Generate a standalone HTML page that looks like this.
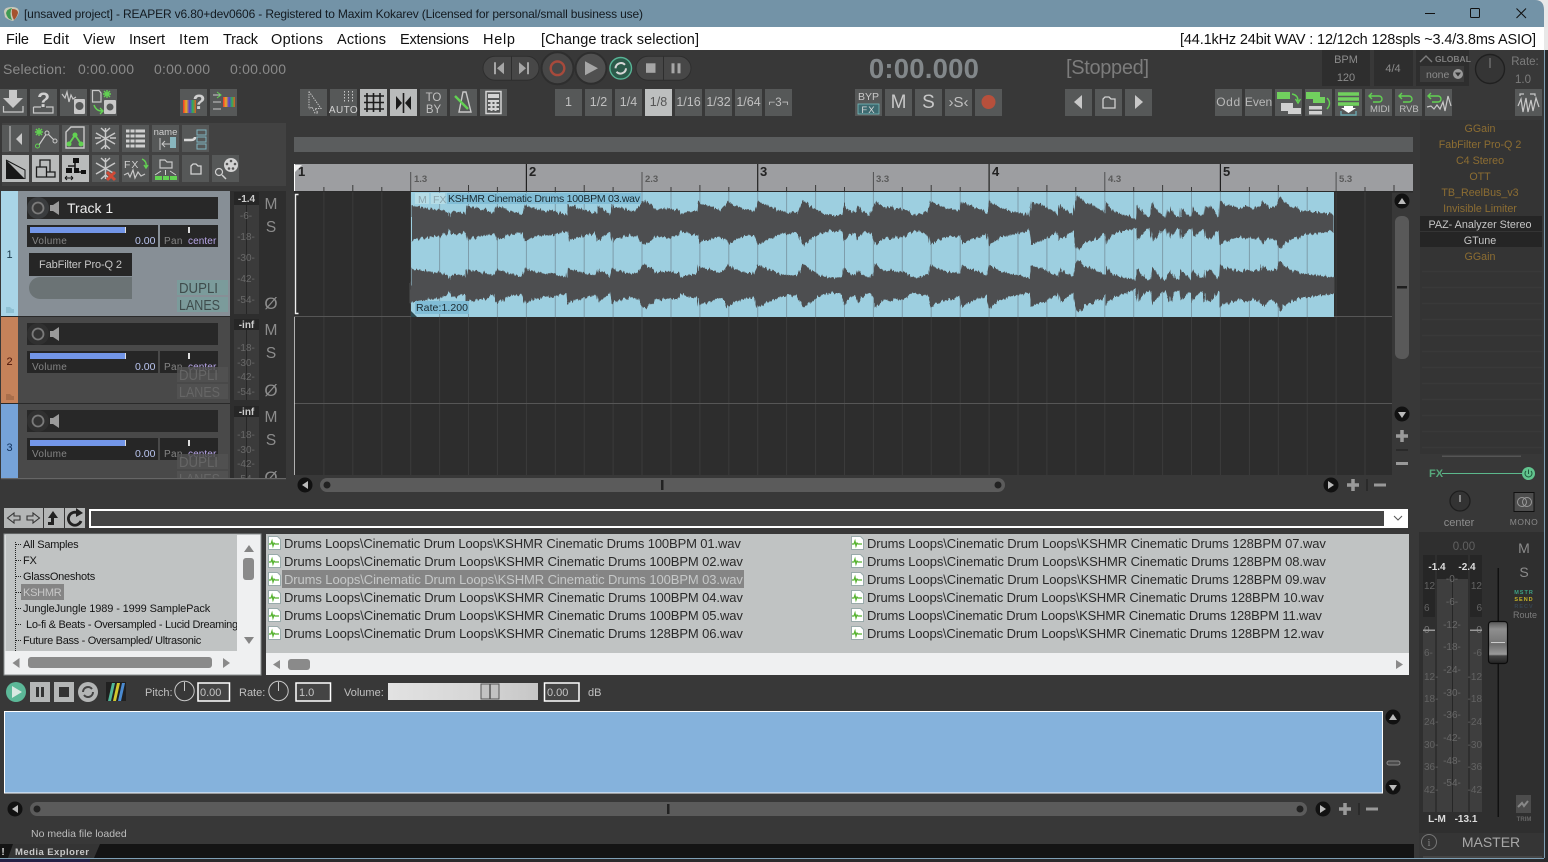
<!DOCTYPE html>
<html><head><meta charset="utf-8"><title>REAPER</title>
<style>
html,body{margin:0;padding:0;background:#2c2c2c;overflow:hidden}
svg{display:block;font-family:"Liberation Sans",sans-serif}
.b{fill:#565858}.l{fill:#b9bbbb}
.ic{fill:none;stroke:#c8c8c8;stroke-width:1.2}
.dk{fill:none;stroke:#1c1c1c;stroke-width:1.6}
.gr{fill:none;stroke:#62d152;stroke-width:1.4}
.t{fill:#c4c4c4;font-size:11px}
.m{font-size:14.5px;fill:#111}
.mid{text-anchor:middle}
.meter{font-size:10px;fill:#696969;text-anchor:middle}
.gold{font-size:10.7px;fill:#8c6d32;text-anchor:middle}
.tree{font-size:11px;fill:#151515;letter-spacing:-.25px}
.file{font-size:13px;fill:#2a2a2a;letter-spacing:.12px}
.lab{font-size:11px;fill:#c0c0c0}
</style></head><body>
<svg width="1548" height="862" viewBox="0 0 1548 862" xmlns="http://www.w3.org/2000/svg">
<defs>
<filter id="jag" filterUnits="userSpaceOnUse" x="405" y="190" width="935" height="130" color-interpolation-filters="sRGB"><feTurbulence type="fractalNoise" baseFrequency="0.55 0.015" numOctaves="2" seed="4" result="n"/><feDisplacementMap in="SourceGraphic" in2="n" scale="6" xChannelSelector="G" yChannelSelector="R"/></filter>
<linearGradient id="rb" x1="0" x2="1" y1="0" y2="0"><stop offset="0" stop-color="#e33"/><stop offset=".25" stop-color="#e8b020"/><stop offset=".5" stop-color="#5a3ad0"/><stop offset=".75" stop-color="#2cb05a"/><stop offset="1" stop-color="#e05a20"/></linearGradient>
<linearGradient id="fd" x1="0" x2="0" y1="0" y2="1"><stop offset="0" stop-color="#555"/><stop offset=".18" stop-color="#8f8f8f"/><stop offset=".45" stop-color="#7a7a7a"/><stop offset=".55" stop-color="#6f6f6f"/><stop offset=".78" stop-color="#9a9a9a"/><stop offset=".82" stop-color="#444"/><stop offset="1" stop-color="#222"/></linearGradient>
<linearGradient id="vs" x1="0" x2="1" y1="0" y2="0"><stop offset="0" stop-color="#e2e2e2"/><stop offset=".6" stop-color="#d6d6d6"/><stop offset="1" stop-color="#c6c6c6"/></linearGradient>
<path id="w" d="M411 0L411 -19L413 -17L416 -16L419 -17L422 -15L425 -16L428 -14L431 -15L435 -13L439 -14L443 -12L447 -11L449 -6L451 -11L455 -12L459 -11L463 -10L466 -9L467 -18L470 -16L473 -15L476 -16L479 -14L482 -13L485 -14L488 -12L491 -11L494 -10L497 -18L500 -15L503 -16L506 -13L510 -12L514 -11L518 -10L522 -9L525 -19L528 -17L531 -15L534 -16L537 -13L540 -14L544 -12L548 -12L552 -13L556 -11L560 -10L564 -9L567 -8L568 -19L571 -16L574 -17L577 -14L580 -15L584 -13L588 -12L592 -11L596 -10L598 -18L601 -15L604 -14L607 -11L610 -8L612 -19L615 -16L618 -15L621 -16L624 -13L627 -14L630 -12L634 -13L638 -14L640 -18L642 -21L645 -23L648 -20L652 -18L655 -14L658 -13L660 -15L664 -14L668 -15L672 -14L676 -13L679 -13L680 -8L684 -10L688 -11L692 -12L695 -12L697 -12L698 -22L701 -19L705 -18L709 -17L713 -16L717 -14L720 -13L724 -16L728 -22L731 -20L735 -17L739 -16L743 -14L747 -13L751 -13L755 -12L757 -22L760 -21L764 -19L768 -17L772 -16L776 -14L780 -12L785 -11L789 -10L793 -11L797 -10L799 -14L803 -23L806 -21L810 -17L815 -14L820 -11L825 -9L830 -8L835 -8L840 -8L842 -9L844 -20L847 -15L850 -12L853 -11L856 -11L858 -18L861 -12L864 -11L867 -9L870 -8L873 -15L876 -23L879 -19L883 -16L887 -15L891 -17L895 -14L899 -15L903 -14L907 -13L911 -9L915 -8L919 -9L923 -10L926 -11L928 -12L930 -22L933 -21L937 -18L941 -17L945 -15L949 -14L953 -14L957 -13L960 -12L962 -22L965 -20L968 -18L972 -17L976 -15L980 -14L984 -12L987 -10L989 -23L992 -20L996 -18L1000 -15L1005 -14L1010 -12L1015 -11L1020 -10L1025 -9L1029 -7L1031 -22L1034 -20L1038 -19L1042 -18L1045 -17L1049 -14L1053 -12L1057 -10L1058 -8L1060 -18L1063 -15L1066 -13L1070 -11L1073 -8L1076 -24L1078 -27L1081 -25L1085 -20L1089 -19L1093 -18L1097 -15L1101 -14L1104 -11L1105 -10L1106 -22L1109 -16L1113 -12L1118 -10L1124 -8L1130 -7L1134 -5L1136 -4L1137 -18L1140 -14L1144 -9L1148 -6L1150 -6L1152 -20L1155 -16L1158 -12L1161 -8L1164 -6L1166 -6L1167 -14L1168 -10L1170 -17L1172 -12L1175 -7L1178 -6L1180 -6L1181 -16L1184 -13L1187 -9L1190 -7L1191 -6L1193 -16L1196 -12L1199 -9L1202 -7L1204 -8L1205 -17L1208 -15L1211 -17L1214 -12L1217 -8L1219 -7L1220 -23L1223 -20L1226 -17L1229 -19L1232 -16L1235 -17L1238 -15L1241 -14L1245 -17L1249 -16L1253 -14L1256 -17L1259 -15L1263 -22L1266 -18L1270 -15L1274 -16L1277 -18L1279 -25L1281 -26L1284 -21L1288 -19L1292 -15L1296 -16L1300 -13L1304 -12L1308 -12L1312 -11L1316 -11L1320 -10L1324 -10L1328 -9L1332 -9L1334 -9L1334 0Z"/>
</defs>

<!-- window base -->
<rect width="1548" height="862" fill="#2a2a2c"/>
<rect x="0" y="0" width="1548" height="50" fill="#e8e8e8"/>
<path d="M0 0H1535Q1544 0 1544 10V27H0Z" fill="#7393a7"/>
<rect x="0" y="27" width="1544" height="23" fill="#fff"/>
<rect x="0" y="50" width="1544" height="808" fill="#383838"/>
<rect x="0" y="858" width="1544" height="1" fill="#7fa0b5"/>
<rect x="1544" y="50" width="1" height="808" fill="#7fa0b5"/>

<!-- title bar -->
<path d="M4 12Q4 7 12 7Q19 7 19 12Q18 17 13 21Q8 20 5 17Z" fill="#c9c9b8"/><path d="M6 13Q7 9 12 8Q9 13 12 20Q7 19 6 13Z" fill="#3f9a52"/><path d="M12 9Q18 9 18 13Q17 17 14 20Q11 15 12 9Z" fill="#a5532f"/>
<text x="24" y="18" font-size="12px" fill="#131a20" textLength="619" lengthAdjust="spacing">[unsaved project] - REAPER v6.80+dev0606 - Registered to Maxim Kokarev (Licensed for personal/small business use)</text>
<path d="M1425 13.5H1435" stroke="#111" stroke-width="1"/><rect x="1470.5" y="8.5" width="9" height="9" fill="none" stroke="#111" rx="1"/><path d="M1516.5 8.5L1526 18M1526 8.5L1516.5 18" stroke="#111" stroke-width="1"/>

<!-- menu -->
<text class="m" x="6" y="44" textLength="23">File</text><text class="m" x="43" y="44" textLength="26">Edit</text><text class="m" x="83" y="44" textLength="32">View</text><text class="m" x="129" y="44" textLength="36">Insert</text><text class="m" x="179" y="44" textLength="30">Item</text><text class="m" x="223" y="44" textLength="35">Track</text><text class="m" x="271" y="44" textLength="52">Options</text><text class="m" x="337" y="44" textLength="49">Actions</text><text class="m" x="400" y="44" textLength="69">Extensions</text><text class="m" x="483" y="44" textLength="32">Help</text><text class="m" x="541" y="44" textLength="158">[Change track selection]</text>
<text class="m" x="1180" y="44" textLength="356">[44.1kHz 24bit WAV : 12/12ch 128spls ~3.4/3.8ms ASIO]</text>

<!-- selection -->
<g font-size="14px" fill="#8a8a8a"><text x="3" y="74" textLength="63">Selection:</text><text x="78" y="74" textLength="56">0:00.000</text><text x="154" y="74" textLength="56">0:00.000</text><text x="230" y="74" textLength="56">0:00.000</text></g>

<!-- transport -->
<g transform="translate(0 -.7)">
<rect x="483" y="57" width="56" height="24" rx="12" fill="#474747" stroke="#2e2e2e"/><path d="M511.5 57V81" stroke="#2e2e2e"/>
<path d="M494 63V75h2V63ZM504 63V75L497 69Z" fill="#a6a6a6"/><path d="M519 63V75L526 69ZM527 63V75h2V63Z" fill="#a6a6a6"/>
<circle cx="557.5" cy="69" r="16" fill="#474747" stroke="#2e2e2e" stroke-width="2"/><circle cx="557.5" cy="69" r="6.8" fill="none" stroke="#a74a3c" stroke-width="2.4"/>
<circle cx="591" cy="69" r="15.5" fill="#505050" stroke="#2e2e2e" stroke-width="2"/><path d="M585 62V76L598 69Z" fill="#a6a6a6"/>
<circle cx="620.7" cy="69" r="10.8" fill="#2b5a4a" stroke="#58b496" stroke-width="1.4"/><path d="M615.5 69a5.5 5.5 0 0 1 9.5-3.5M626 69a5.5 5.5 0 0 1-9.5 3.5" fill="none" stroke="#d6d6d6" stroke-width="2"/>
<rect x="636" y="57" width="55" height="24" rx="12" fill="#474747" stroke="#2e2e2e"/><path d="M663.5 57V81" stroke="#2e2e2e"/>
<rect x="646" y="64" width="9.5" height="9.5" fill="#a6a6a6"/><rect x="671.5" y="64" width="3" height="10" fill="#a6a6a6"/><rect x="677.5" y="64" width="3" height="10" fill="#a6a6a6"/>
</g>
<text x="924" y="78" font-size="27.5px" font-weight="bold" fill="#82878a" class="mid" letter-spacing=".2">0:00.000</text>
<text x="1066" y="74" font-size="20px" fill="#7c7c7c" textLength="83">[Stopped]</text>

<rect x="1322" y="50" width="48" height="36" fill="#2e2e2e"/><rect x="1374" y="50" width="39" height="36" fill="#2e2e2e"/><rect x="1416" y="50" width="53" height="36" fill="#2e2e2e"/>
<text x="1346" y="63" font-size="11px" fill="#8c8c8c" class="mid">BPM</text><text x="1346" y="81" font-size="11px" fill="#8c8c8c" class="mid">120</text>
<text x="1393" y="72" font-size="11px" fill="#8c8c8c" class="mid">4/4</text>
<path d="M1420 62L1426 56L1432 62" fill="none" stroke="#7d7d7d" stroke-width="1.4"/>
<text x="1435" y="62" font-size="8.5px" font-weight="bold" fill="#808080">GLOBAL</text>
<rect x="1420" y="66" width="44" height="16" fill="#3c3c3c"/><text x="1426" y="78" font-size="10.5px" fill="#8c8c8c">none</text><circle cx="1458" cy="74" r="5" fill="#9a9a9a"/><path d="M1455 72.5h6l-3 4z" fill="#333"/>
<circle cx="1490" cy="69" r="14.5" fill="#353535" stroke="#202020" stroke-width="1.4"/><path d="M1490 58V68" stroke="#888"/>
<text x="1525" y="65" font-size="11.5px" fill="#7c7c7c" class="mid">Rate:</text><text x="1523" y="83" font-size="11.5px" fill="#7c7c7c" class="mid">1.0</text>

<!-- toolbar row 1 -->
<g transform="translate(0 -1)">
<rect class="b" x="0" y="90" width="27" height="27"/>
<path d="M9 92H17V100H23L13 110L3 100H9Z" fill="#c8c8c8" transform="translate(0 -1)"/><path d="M3.5 107V113H23V107" class="ic"/>
<rect class="b" x="30" y="90" width="27" height="27"/>
<text x="43.5" y="108" font-size="21px" font-weight="bold" fill="#d0d0d0" class="mid">?</text><path d="M33.5 108V114H53V108H46M41 108H33.5" class="ic"/>
<rect class="b" x="60" y="90" width="27" height="27"/>
<path d="M62 95L65 99L67 93L69 103L71 96L73 100L76 98" class="ic"/><rect x="74" y="100" width="11" height="15" rx="1" fill="#c8c8c8"/><circle cx="79.5" cy="107" r="4" fill="#565858"/>
<rect class="b" x="90" y="90" width="27" height="27"/>
<path d="M92.500 91.500H99L101 94V103H92.500Z" class="ic"/><path d="M107 91L107 99M103 95H111M104 92L110 98M110 92L104 98" stroke="#62d152" stroke-width="1.4"/><path d="M94 106Q96 112 102 112M100 109L103 112L100 115" class="gr"/><rect x="104" y="101" width="12" height="14" rx="1" fill="#c8c8c8"/><circle cx="110" cy="108" r="3.5" fill="#565858"/>
<rect class="b" x="180" y="90" width="27" height="27"/>
<rect x="183" y="101" width="13" height="13" fill="url(#rb)"/><text x="199" y="110" font-size="21px" font-weight="bold" fill="#d0d0d0" class="mid">?</text>
<rect class="b" x="210" y="90" width="27" height="27"/>
<rect x="223" y="98" width="12" height="10" fill="url(#rb)"/><path d="M213 96H221M213 103H221M213 110H221" stroke="#c8c8c8"/><path d="M217 93L221 96L217 99" fill="none" stroke="#62d152"/>

<rect class="b" x="300" y="90" width="27" height="27"/>
<path d="M309 92.500V110M309 92.500L321 109.500H315L318 114H315L312 108L309 110" fill="none" stroke="#c8c8c8" stroke-dasharray="1.4 1.1"/>
<rect class="b" x="330" y="90" width="27" height="27"/>
<path d="M344.500 92V104M348.500 92V104M352.500 92V104" stroke="#c8c8c8" stroke-dasharray="1.5 1.5"/><text x="343.500" y="114" font-size="10px" fill="#d0d0d0" class="mid" letter-spacing=".4">AUTO</text>
<rect class="l" x="360" y="90" width="27" height="27"/>
<path d="M367 94V113M373.500 94V113M380 94V113M364 97H384M364 103.500H384M364 110H384" class="dk" stroke-width="1.6"/>
<rect class="l" x="390" y="90" width="27" height="27"/>
<path d="M396 97V111L402 104ZM411 97V111L405 104Z" fill="#1a1a1a"/><path d="M403.500 94V114" stroke="#1a1a1a" stroke-width="1.6"/>
<rect class="b" x="420" y="90" width="27" height="27"/>
<text x="433.500" y="102" font-size="11.500px" fill="#c0c0c0" class="mid">TO</text><text x="433.500" y="114" font-size="11.500px" fill="#c0c0c0" class="mid">BY</text>
<rect class="b" x="450" y="90" width="27" height="27"/>
<path d="M459 113L463 93H466L471 113Z" fill="none" stroke="#c8c8c8" stroke-width="1.4"/><path d="M455 97L468 110" stroke="#62d152" stroke-width="2.4"/>
<rect class="b" x="480" y="90" width="27" height="27"/>
<rect x="486" y="92.500" width="15" height="22" fill="none" stroke="#d4d4d4" stroke-width="1.5"/><rect x="488" y="95" width="11" height="4" fill="#d4d4d4"/><path d="M488 102h11M488 106h11M488 110h11M491.500 101v11M495.500 101v11" stroke="#d4d4d4" stroke-width="2" stroke-dasharray="none"/>

<g font-size="12.500px" fill="#c0c0c0" text-anchor="middle">
<rect class="b" x="555" y="90" width="27" height="27"/><text x="568.500" y="107">1</text>
<rect class="b" x="585" y="90" width="27" height="27"/><text x="598.500" y="107">1/2</text>
<rect class="b" x="615" y="90" width="27" height="27"/><text x="628.500" y="107">1/4</text>
<rect x="645" y="90" width="27" height="27" fill="#bdbfbf"/><text x="658.500" y="107" fill="#555">1/8</text>
<rect class="b" x="675" y="90" width="27" height="27"/><text x="688.500" y="107">1/16</text>
<rect class="b" x="705" y="90" width="27" height="27"/><text x="718.500" y="107">1/32</text>
<rect class="b" x="735" y="90" width="27" height="27"/><text x="748.500" y="107">1/64</text>
<rect class="b" x="765" y="90" width="27" height="27"/><text x="778.500" y="107" font-size="11.500px">⌐3¬</text>
</g>
<rect class="b" x="855" y="90" width="27" height="27"/><text x="868.500" y="101" font-size="10.500px" fill="#c8c8c8" class="mid">BYP</text><rect x="858" y="105" width="21" height="10" fill="#3d6a70" stroke="#7bb" stroke-width="0.8"/><text x="868.500" y="114" font-size="9.500px" fill="#d8d8d8" class="mid" letter-spacing="1">FX</text>
<rect class="b" x="885" y="90" width="27" height="27"/><text x="898.500" y="109" font-size="19px" fill="#c8c8c8" class="mid">M</text>
<rect class="b" x="915" y="90" width="27" height="27"/><text x="928.500" y="109" font-size="19px" fill="#c8c8c8" class="mid">S</text>
<rect class="b" x="945" y="90" width="27" height="27"/><text x="958.500" y="108" font-size="15px" fill="#c0c0c0" class="mid">›S‹</text>
<rect class="b" x="975" y="90" width="27" height="27"/><circle cx="988.500" cy="103" r="7" fill="#b7503c"/>
<rect class="b" x="1065" y="90" width="27" height="27"/><path d="M1074 103L1082 96V110Z" fill="#c8c8c8"/>
<rect class="b" x="1095" y="90" width="27" height="27"/><path d="M1103 109V100L1105 98H1109L1111 100H1115V109Z" fill="none" stroke="#d0d0d0" stroke-width="1.3"/>
<rect class="b" x="1125" y="90" width="27" height="27"/><path d="M1135 96V110L1143 103Z" fill="#c8c8c8"/>
<rect class="b" x="1215" y="90" width="27" height="27"/><text x="1228.500" y="107" font-size="12px" fill="#b8b8b8" class="mid" letter-spacing=".6">Odd</text>
<rect class="b" x="1245" y="90" width="27" height="27"/><text x="1258.500" y="107" font-size="12px" fill="#b8b8b8" class="mid">Even</text>
<rect class="b" x="1275" y="90" width="27" height="27"/><rect x="1277" y="93" width="13" height="7" fill="#71d05e"/><rect x="1281" y="104" width="12" height="8" fill="#d0d0d0"/><rect x="1288" y="109" width="13" height="6" fill="#d0d0d0"/><path d="M1292 95Q1298 96 1298 102M1295.500 100L1298 104L1300.500 100" class="gr"/>
<rect class="b" x="1305" y="90" width="27" height="27"/><rect x="1306" y="93" width="14" height="7" fill="#71d05e"/><rect x="1313" y="98" width="12" height="6" fill="#71d05e"/><rect x="1309" y="107" width="13" height="3.500" fill="#d0d0d0"/><rect x="1309" y="112" width="13" height="3.500" fill="#d0d0d0"/><path d="M1327 99Q1332 104 1327 110" class="gr"/>
<rect class="b" x="1335" y="90" width="27" height="27"/><path d="M1338 95h21M1338 100h21M1338 105h21" stroke="#71d05e" stroke-width="3.500"/><path d="M1344 109h9v2h3l-7.500 5-7.500-5h3z" fill="#fff" transform="translate(0 -2)"/><path d="M1341 112v4h15v-4" fill="none" stroke="#6ba6ae" stroke-width="1.400"/>
<rect class="b" x="1365" y="90" width="27" height="27"/><path d="M1370 97h9a3 3 0 0 1 0 6h-6M1372 94l-3 3 3 3" class="gr"/><text x="1380" y="113" font-size="9.500px" fill="#c0c0c0" class="mid">MIDI</text>
<rect class="b" x="1395" y="90" width="27" height="27"/><path d="M1400 97h9a3 3 0 0 1 0 6h-6M1402 94l-3 3 3 3" class="gr"/><text x="1409" y="113" font-size="9.500px" fill="#c0c0c0" class="mid">RVB</text>
<rect class="b" x="1425" y="90" width="27" height="27"/><path d="M1429 97h9a3 3 0 0 1 0 6h-6M1431 94l-3 3 3 3" class="gr"/><path d="M1427 108L1431 107L1434 110L1437 106L1440 110L1443 103L1445 112L1448 97L1451 107" class="ic"/>
<rect class="b" x="1515" y="90" width="27" height="27"/><path d="M1520 97v-2h4M1530 95h5v2M1518 107L1521 100L1523 113L1526 99L1528 113L1531 101L1533 112L1536 99L1539 108" class="ic"/>
</g>

<!-- tcp toolbar panel -->
<rect x="2" y="123" width="284" height="63" fill="#424242"/>
<rect class="b" x="2" y="125" width="27" height="27"/><path d="M10 126V151" stroke="#c8c8c8"/><path d="M16 139L22 133V145Z" fill="#c8c8c8"/>
<rect class="b" x="32" y="125" width="27" height="27"/><path d="M37 148L47 133L56 142" class="ic"/><circle cx="47" cy="133" r="2" fill="#565858" stroke="#c8c8c8"/><circle cx="37.500" cy="146" r="2" fill="#565858" stroke="#62d152"/><circle cx="55" cy="141" r="2" fill="#565858" stroke="#c8c8c8"/><path d="M39 128v8M35 132h8M36 129l6 6M42 129l-6 6" stroke="#62d152" stroke-width="1.400"/>
<rect class="b" x="62" y="125" width="27" height="27"/><path d="M66 132L71 127H84V148H66Z" fill="none" stroke="#c8c8c8" stroke-width="1.400"/><path d="M69 144L75 135L81 144" fill="none" stroke="#62d152" stroke-width="1.800"/><circle cx="69" cy="144" r="2.500" fill="#62d152"/><circle cx="75" cy="135" r="2.500" fill="#62d152"/><circle cx="81" cy="144" r="2.500" fill="#62d152"/>
<rect class="b" x="92" y="125" width="27" height="27"/><path d="M105.500 128V149M96 133L115 144M96 144L115 133M101 128l4.500 4 4.500-4M101 149l4.500-4 4.500 4M95 138l6 0M110 138l6 0" stroke="#c8c8c8" stroke-width="1.500" fill="none"/>
<rect class="b" x="122" y="125" width="27" height="27"/><path d="M126 131H145M126 136H145M126 141H145M126 146H145" stroke="#cfcfcf" stroke-width="3"/><path d="M130 128V149M135 128V149" stroke="#565858"/>
<rect class="b" x="152" y="125" width="27" height="27"/><text x="165.500" y="135" font-size="9.500px" fill="#d0d0d0" class="mid">name</text><path d="M162 144H172M165 141L162 144L165 147M160 138V150" fill="none" stroke="#c8c8c8" stroke-dasharray="none"/><rect x="170" y="137" width="6" height="11" fill="#88b6be"/>
<rect class="b" x="182" y="125" width="27" height="27"/><rect x="197" y="130" width="9" height="5" fill="none" stroke="#7fb3c0"/><rect x="197" y="137" width="9" height="5" fill="none" stroke="#7fb3c0"/><rect x="197" y="144" width="9" height="5" fill="none" stroke="#7fb3c0"/><path d="M184 140H191Q195 140 195 137" fill="none" stroke="#d8d8d8" stroke-width="2.500"/>

<rect class="l" x="2" y="155" width="27" height="27"/><path d="M6 160V179H25Z" fill="#181818"/><path d="M6 160L25 170V179" fill="none" stroke="#181818"/>
<rect class="l" x="32" y="155" width="27" height="27"/><path d="M36.500 167H46.500V177H36.500ZM46.500 172H55V177H46.500ZM40 167V160H50V172" fill="none" stroke="#1c1c1c" stroke-width="1.300"/>
<rect class="l" x="62" y="155" width="27" height="27"/><path d="M75 160V172H85M75 166H68" fill="none" stroke="#1a1a1a" stroke-width="1.600"/><rect x="73" y="158" width="6" height="5" fill="#111"/><rect x="66" y="168" width="6" height="5" fill="#111"/><rect x="74" y="168" width="5" height="5" fill="#111"/><rect x="81" y="170" width="5" height="4" fill="#111"/><path d="M65 178H73M65 178l2-2M65 178l2 2M73 178l-2-2M73 178l-2 2" stroke="#111" fill="none"/>
<rect class="b" x="92" y="155" width="27" height="27"/><path d="M105.500 158V179M96 163L115 174M96 174L115 163M101 158l4.500 4 4.500-4M101 179l4.500-4 4.500 4" stroke="#c8c8c8" stroke-width="1.500" fill="none"/><path d="M107 172L115 180M115 172L107 180" stroke="#d04a36" stroke-width="3"/>
<rect class="b" x="122" y="155" width="27" height="27"/><text x="124" y="168" font-size="10.500px" fill="#d0d0d0" letter-spacing="1">FX</text><path d="M142 159Q147 161 146 167M144 165L146 168L148 165" class="gr"/><path d="M124 175L128 173L130 177L133 170L135 178L138 172L141 176L145 174" class="ic"/>
<rect class="b" x="152" y="155" width="27" height="27"/><path d="M160 168V160H165L167 162H172V168Z" fill="none" stroke="#c8c8c8" stroke-width="1.200"/><path d="M155 175L161 171M165.500 170V175M176 175L170 171" stroke="#d0d0d0"/><rect x="155" y="176" width="7" height="4" fill="#62d152"/><rect x="163" y="176" width="6" height="4" fill="#62d152"/><rect x="170" y="176" width="7" height="4" fill="#62d152"/>
<rect class="b" x="182" y="155" width="27" height="27"/><path d="M191 174V166L193 164H196L198 166H201V174Z" fill="none" stroke="#d4d4d4" stroke-width="1.300"/>
<rect class="b" x="212" y="155" width="27" height="27"/><circle cx="231" cy="165" r="7" fill="#d2d2d2"/><g fill="#555"><circle cx="231" cy="161" r="1.300"/><circle cx="227" cy="164" r="1.300"/><circle cx="235" cy="164" r="1.300"/><circle cx="229" cy="168.500" r="1.300"/><circle cx="233" cy="168.500" r="1.300"/></g><circle cx="219" cy="172" r="3.500" fill="none" stroke="#d0d0d0" stroke-width="1.200"/><path d="M222 175L226 179" stroke="#d0d0d0" stroke-width="1.500"/>

<!-- arrange -->
<rect x="294" y="137" width="1119" height="15" fill="#5b5d5e"/>
<rect x="294" y="164" width="1119" height="27" fill="#9d9ea1"/>
<path d="M323.900 187V191M352.800 185V191M381.800 187V191M439.600 187V191M468.500 185V191M497.400 187V191M555.300 187V191M584.200 185V191M613.100 187V191M671 187V191M699.900 185V191M728.800 187V191M786.600 187V191M815.600 185V191M844.500 187V191M902.300 187V191M931.200 185V191M960.200 187V191M1018 187V191M1046.900 185V191M1075.800 187V191M1133.700 187V191M1162.600 185V191M1191.500 187V191M1249.400 187V191M1278.300 185V191M1307.200 187V191M1365 187V191M1394 185V191" stroke="#3a3a3a"/>
<path d="M410.700 172V191M642 172V191M873.400 172V191M1104.800 172V191M1336.100 172V191" stroke="#4e4e50"/>
<path d="M526.400 164V191M757.700 164V191M989.100 164V191M1220.400 164V191" stroke="#202020" stroke-width="1.200"/>
<path d="M294.500 164V191" stroke="#fff"/><path d="M295 165H302L295 172Z" fill="#eee"/>
<g font-size="13px" font-weight="bold" fill="#222"><text x="298" y="176">1</text><text x="529" y="176">2</text><text x="760" y="176">3</text><text x="992" y="176">4</text><text x="1223" y="176">5</text></g>
<g font-size="9.500px" font-weight="bold" fill="#5a5a5a"><text x="414" y="182">1.3</text><text x="645" y="182">2.3</text><text x="876" y="182">3.3</text><text x="1108" y="182">4.3</text><text x="1339" y="182">5.3</text></g>
<rect x="294" y="191" width="1119" height="1.500" fill="#2a2a2a"/>
<rect x="294" y="192" width="1098" height="283" fill="#2d2d2d"/>
<path d="M323.900 192V475M352.800 192V475M381.800 192V475M410.700 192V475M439.600 192V475M468.500 192V475M497.400 192V475M526.400 192V475M555.300 192V475M584.200 192V475M613.100 192V475M642 192V475M671 192V475M699.900 192V475M728.800 192V475M757.700 192V475M786.600 192V475M815.600 192V475M844.500 192V475M873.400 192V475M902.300 192V475M931.200 192V475M960.200 192V475M989.100 192V475M1018 192V475M1046.900 192V475M1075.800 192V475M1104.800 192V475M1133.700 192V475M1162.600 192V475M1191.500 192V475M1220.400 192V475M1249.400 192V475M1278.300 192V475M1307.200 192V475M1336.100 192V475M1365 192V475" stroke="#3b3b3b"/>
<path d="M294 316.500H1392M294 403.500H1392" stroke="#565656"/>
<path d="M298.500 194.500H295.500V313.500H298.500" fill="none" stroke="#eee" stroke-width="1.400"/><path d="M294.500 317V475" stroke="#e8e8e8" stroke-opacity=".7"/>
<!-- clip -->
<rect x="411" y="192" width="923" height="125" fill="#9dcfe0"/>
<path d="M439.600 192V317M468.500 192V317M497.400 192V317M526.400 192V317M555.300 192V317M584.200 192V317M613.100 192V317M642 192V317M671 192V317M699.900 192V317M728.800 192V317M757.700 192V317M786.600 192V317M815.600 192V317M844.500 192V317M873.400 192V317M902.300 192V317M931.200 192V317M960.200 192V317M989.100 192V317M1018 192V317M1046.900 192V317M1075.800 192V317M1104.800 192V317M1133.700 192V317M1162.600 192V317M1191.500 192V317M1220.400 192V317M1249.400 192V317M1278.300 192V317M1307.200 192V317" stroke="#7e9dab"/>
<g fill="#4d4e50" filter="url(#jag)"><use href="#w" transform="translate(0 223)"/><use href="#w" transform="translate(0 223) scale(1 -.98)"/><use href="#w" transform="translate(0 285) scale(1 .92)"/><use href="#w" transform="translate(0 285) scale(1 -1)"/></g>
<rect x="415" y="193" width="14" height="11" fill="#b5dce6"/><rect x="431" y="193" width="14" height="11" fill="#b5dce6"/>
<text x="418" y="203" font-size="10.500px" fill="#8da5ad">M</text><text x="433" y="203" font-size="10.500px" fill="#8da5ad">FX</text>
<rect x="447" y="193" width="194" height="11" fill="#81bdd6"/><text x="448" y="202" font-size="10.500px" fill="#1a2a30" textLength="192">KSHMR Cinematic Drums 100BPM 03.wav</text>
<rect x="415" y="301" width="54" height="13" fill="#81bdd6"/><text x="416" y="311" font-size="10.500px" fill="#1a2a30" textLength="52">Rate:1.200</text>
<path d="M411 311L417 317H411Z" fill="#2d4a50"/>

<!-- v scroll -->
<circle cx="1402" cy="201" r="7.500" fill="#111"/><path d="M1398 204h8l-4-6z" fill="#bbb"/>
<rect x="1395" y="216" width="14" height="143" rx="6" fill="#595959"/><rect x="1397" y="286" width="10" height="2.500" fill="#1f1f1f"/>
<circle cx="1402" cy="414" r="7.500" fill="#111"/><path d="M1398 412h8l-4 6z" fill="#bbb"/>
<path d="M1396 436H1408M1402 430V442" stroke="#9a9a9a" stroke-width="3.500"/><rect x="1396" y="449" width="12" height="2" fill="#2a2a2a"/><rect x="1396" y="462" width="12" height="3" fill="#999"/>
<!-- h scroll -->
<circle cx="305" cy="485" r="7.500" fill="#111"/><path d="M308 481v8l-6-4z" fill="#bbb"/>
<rect x="320" y="478" width="685" height="14" rx="7" fill="#5b5b5b"/><circle cx="327" cy="485" r="3.500" fill="#222"/><circle cx="998" cy="485" r="3.500" fill="#222"/><rect x="661" y="480" width="2.500" height="10" fill="#222"/>
<circle cx="1331" cy="485" r="7.500" fill="#111"/><path d="M1328 481v8l6-4z" fill="#bbb"/>
<path d="M1347 485H1359M1353 479V491" stroke="#9a9a9a" stroke-width="3.500"/><rect x="1366" y="479" width="2" height="12" fill="#2a2a2a"/><rect x="1374" y="483.500" width="12" height="3" fill="#999"/>

<!-- TCP -->
<rect x="1" y="191" width="285" height="287" fill="#2e2e2e"/>
<!-- track 1 -->
<rect x="1" y="191" width="17" height="125" fill="#a9d5e7"/><text x="9.500" y="258" font-size="11px" fill="#1b3a4a" class="mid">1</text><path d="M6 313V307H10L12 309H14V313Z" fill="#8fc0d2"/>
<rect x="18" y="191" width="212" height="125" fill="#878f96"/>
<rect x="27" y="197" width="191" height="22" fill="#282828"/><circle cx="38" cy="208" r="11" fill="#3a3c3e"/><circle cx="38" cy="208" r="5.500" fill="#3a3a3a" stroke="#7a7a7a" stroke-width="1.800"/>
<path d="M50 205h3l6-4v14l-6-4h-3z" fill="#9b9b9b"/><text x="67" y="213" font-size="14px" fill="#eee">Track 1</text>
<rect x="27" y="225" width="131" height="22" fill="#262626"/><rect x="30" y="227" width="96" height="6" fill="#7396e8"/><rect x="125" y="227" width="1" height="6" fill="#ddd"/>
<text x="32" y="244" font-size="10px" fill="#858585" letter-spacing=".3">Volume</text><text x="135" y="244" font-size="10.500px" fill="#b9c4ee">0.00</text>
<rect x="160" y="225" width="58" height="22" fill="#262626"/><rect x="188" y="227" width="2" height="6" fill="#ddd"/><text x="164" y="244" font-size="10px" fill="#858585" letter-spacing=".3">Pan</text><text x="188" y="244" font-size="10px" fill="#b8a6e8" letter-spacing=".1">center</text>
<rect x="29" y="253" width="103" height="23" fill="#262626"/><text x="39" y="268" font-size="11px" fill="#c6c6c6" textLength="83">FabFilter Pro-Q 2</text>
<path d="M132 277V299H40A11 11 0 0 1 40 277Z" fill="#6b7375"/>
<rect x="177" y="280" width="51" height="15" fill="#7b9b9b"/><rect x="177" y="297" width="51" height="15" fill="#7b9b9b"/>
<text x="179" y="293" font-size="14.500px" fill="#3f4c4c" textLength="39" lengthAdjust="spacingAndGlyphs">DUPLI</text><text x="179" y="310" font-size="14.500px" fill="#3f4c4c" textLength="41" lengthAdjust="spacingAndGlyphs">LANES</text>
<rect x="234" y="192" width="25" height="122" fill="#3b3b3b"/><rect x="234" y="192" width="25" height="13" fill="#262626"/><path d="M246.500 205V314" stroke="#262626"/>
<text x="246.500" y="202" font-size="10px" font-weight="bold" fill="#ccc" class="mid">-1.4</text>
<g class="meter"><text x="246" y="219" class="meter">-6-</text><text x="246" y="240" class="meter">-18-</text><text x="246" y="261" class="meter">-30-</text><text x="246" y="282" class="meter">-42-</text><text x="246" y="303" class="meter">-54-</text></g>
<text x="271" y="209" font-size="15.500px" fill="#8c8c8c" class="mid">M</text><text x="271" y="232" font-size="15.500px" fill="#8c8c8c" class="mid">S</text><text x="271" y="309" font-size="17px" fill="#8c8c8c" class="mid">Ø</text>
<!-- track 2 -->
<rect x="1" y="317" width="17" height="86" fill="#c5825a"/><text x="9.500" y="365" font-size="11px" fill="#4a1408" class="mid">2</text><path d="M6 400V394H10L12 396H14V400Z" fill="#a96e4b"/>
<rect x="18" y="317" width="212" height="86" fill="#494949"/>
<rect x="27" y="323" width="191" height="22" fill="#282828"/><circle cx="38" cy="334" r="11" fill="#303030"/><circle cx="38" cy="334" r="5.500" fill="#333" stroke="#7a7a7a" stroke-width="1.800"/><path d="M50 331h3l6-4v14l-6-4h-3z" fill="#9b9b9b"/>
<rect x="27" y="351" width="131" height="22" fill="#262626"/><rect x="30" y="353" width="96" height="6" fill="#7396e8"/><rect x="125" y="353" width="1" height="6" fill="#ddd"/>
<text x="32" y="370" font-size="10px" fill="#858585" letter-spacing=".3">Volume</text><text x="135" y="370" font-size="10.500px" fill="#b9c4ee">0.00</text>
<rect x="160" y="351" width="58" height="22" fill="#262626"/><rect x="188" y="353" width="2" height="6" fill="#ddd"/><text x="164" y="370" font-size="10px" fill="#858585" letter-spacing=".3">Pan</text><text x="188" y="370" font-size="10px" fill="#b8a6e8" letter-spacing=".1">center</text>
<rect x="177" y="367" width="51" height="15" fill="#515151" fill-opacity=".85"/><rect x="177" y="384" width="51" height="15" fill="#515151"/>
<text x="179" y="380" font-size="14.500px" fill="#666" textLength="39" lengthAdjust="spacingAndGlyphs">DUPLI</text><text x="179" y="397" font-size="14.500px" fill="#666" textLength="41" lengthAdjust="spacingAndGlyphs">LANES</text>
<rect x="234" y="319" width="25" height="81" fill="#3b3b3b"/><rect x="234" y="319" width="25" height="11" fill="#262626"/><path d="M246.500 330V400" stroke="#262626"/>
<text x="246.500" y="328" font-size="10px" font-weight="bold" fill="#ccc" class="mid">-inf</text>
<text x="246" y="351" class="meter">-18-</text><text x="246" y="366" class="meter">-30-</text><text x="246" y="380" class="meter">-42-</text><text x="246" y="395" class="meter">-54-</text>
<text x="271" y="335" font-size="15.500px" fill="#8c8c8c" class="mid">M</text><text x="271" y="358" font-size="15.500px" fill="#8c8c8c" class="mid">S</text><text x="271" y="396" font-size="17px" fill="#8c8c8c" class="mid">Ø</text>
<!-- track 3 -->
<rect x="1" y="404" width="17" height="74" fill="#76a3d8"/><text x="9.500" y="451" font-size="11px" fill="#10305a" class="mid">3</text>
<rect x="18" y="404" width="212" height="74" fill="#494949"/>
<rect x="27" y="410" width="191" height="22" fill="#282828"/><circle cx="38" cy="421" r="11" fill="#303030"/><circle cx="38" cy="421" r="5.500" fill="#333" stroke="#7a7a7a" stroke-width="1.800"/><path d="M50 418h3l6-4v14l-6-4h-3z" fill="#9b9b9b"/>
<rect x="27" y="438" width="131" height="22" fill="#262626"/><rect x="30" y="440" width="96" height="6" fill="#7396e8"/><rect x="125" y="440" width="1" height="6" fill="#ddd"/>
<text x="32" y="457" font-size="10px" fill="#858585" letter-spacing=".3">Volume</text><text x="135" y="457" font-size="10.500px" fill="#b9c4ee">0.00</text>
<rect x="160" y="438" width="58" height="22" fill="#262626"/><rect x="188" y="440" width="2" height="6" fill="#ddd"/><text x="164" y="457" font-size="10px" fill="#858585" letter-spacing=".3">Pan</text><text x="188" y="457" font-size="10px" fill="#b8a6e8" letter-spacing=".1">center</text>
<rect x="177" y="454" width="51" height="15" fill="#515151" fill-opacity=".85"/><rect x="177" y="471" width="51" height="15" fill="#515151"/>
<text x="179" y="467" font-size="14.500px" fill="#666" textLength="39" lengthAdjust="spacingAndGlyphs">DUPLI</text><text x="179" y="484" font-size="14.500px" fill="#666" textLength="41" lengthAdjust="spacingAndGlyphs">LANES</text>
<rect x="234" y="406" width="25" height="72" fill="#3b3b3b"/><rect x="234" y="406" width="25" height="11" fill="#262626"/><path d="M246.500 417V478" stroke="#262626"/>
<text x="246.500" y="415" font-size="10px" font-weight="bold" fill="#ccc" class="mid">-inf</text>
<text x="246" y="438" class="meter">-18-</text><text x="246" y="453" class="meter">-30-</text><text x="246" y="467" class="meter">-42-</text><text x="246" y="482" class="meter">-54-</text>
<text x="271" y="422" font-size="15.500px" fill="#8c8c8c" class="mid">M</text><text x="271" y="445" font-size="15.500px" fill="#8c8c8c" class="mid">S</text><text x="271" y="483" font-size="17px" fill="#8c8c8c" class="mid">Ø</text>
<path d="M1 316.500H230M1 403.500H230" stroke="#2a2a2a"/>
<rect x="0" y="478" width="290" height="28" fill="#383838"/><rect x="1" y="478" width="285" height="1.200" fill="#666"/>

<!-- FX panel -->
<rect x="1420" y="120" width="122" height="334" fill="#343434"/>
<path d="M1422 271.500H1542M1422 287.500H1542M1422 303.500H1542M1422 319.500H1542M1422 335.500H1542M1422 351.500H1542M1422 367.500H1542M1422 383.500H1542M1422 399.500H1542M1422 415.500H1542M1422 431.500H1542M1422 447.500H1542" stroke="#393939" stroke-width="1.500"/>
<rect x="1420" y="216" width="122" height="15" fill="#252525"/><rect x="1420" y="232" width="122" height="15" fill="#252525"/>
<text class="gold" x="1480" y="132">GGain</text><text class="gold" x="1480" y="148">FabFilter Pro-Q 2</text><text class="gold" x="1480" y="164">C4 Stereo</text><text class="gold" x="1480" y="180">OTT</text><text class="gold" x="1480" y="196">TB_ReelBus_v3</text><text class="gold" x="1480" y="212">Invisible Limiter</text>
<text x="1480" y="228" font-size="10.800px" fill="#c6c6c6" class="mid">PAZ- Analyzer Stereo</text><text x="1480" y="244" font-size="10.800px" fill="#c6c6c6" class="mid">GTune</text><text class="gold" x="1480" y="260">GGain</text>
<rect x="1442" y="455.500" width="79" height="1.500" fill="#555"/>
<text x="1429" y="477" font-size="11px" font-weight="bold" fill="#57a87c">FX</text><path d="M1442 473.500H1524" stroke="#5cb88c"/><circle cx="1528.500" cy="473.500" r="6.500" fill="#62c48e"/><path d="M1526 471a3.500 3.500 0 1 0 5 0M1528.500 469.500V474" fill="none" stroke="#1f5a3c"/>
<circle cx="1460" cy="501" r="10" fill="#333" stroke="#1e1e1e" stroke-width="1.300"/><path d="M1460 495V502" stroke="#aaa" stroke-width="1.400"/>
<text x="1459" y="526" font-size="11px" fill="#8d8d8d" class="mid">center</text>
<rect x="1514" y="492.500" width="20" height="19" fill="#4d4d4d" stroke="#111"/><circle cx="1522" cy="502" r="4.500" fill="none" stroke="#999"/><circle cx="1527" cy="502" r="4.500" fill="none" stroke="#999"/>
<text x="1524" y="525" font-size="8.500px" fill="#8a8a8a" class="mid" letter-spacing=".5">MONO</text>

<!-- master -->
<rect x="1419" y="532" width="125" height="308" fill="#2f2f2f"/>
<rect x="1419" y="833" width="125" height="25" fill="#353535"/><path d="M1423 857H1542" stroke="#555"/>
<text x="1464" y="550" font-size="11.500px" fill="#606060" class="mid">0.00</text>
<text x="1524" y="553" font-size="14px" fill="#8c8c8c" class="mid">M</text><text x="1524" y="577" font-size="14px" fill="#8c8c8c" class="mid">S</text>
<text x="1524" y="594" font-size="5.500px" font-weight="bold" fill="#3da084" class="mid" letter-spacing="1">MSTR</text><text x="1524" y="601" font-size="5.500px" font-weight="bold" fill="#c4b228" class="mid" letter-spacing="1">SEND</text><text x="1524" y="608" font-size="5.500px" font-weight="bold" fill="#374450" class="mid" letter-spacing="1">RECV</text>
<text x="1525" y="618" font-size="9px" fill="#7c7c7c" class="mid">Route</text>
<rect x="1423" y="555" width="12" height="62" fill="#262626"/><rect x="1470" y="555" width="12" height="62" fill="#262626"/><rect x="1437" y="555" width="31" height="24" fill="#262626"/>
<rect x="1423" y="630" width="12" height="182" fill="#3e3e3e"/><rect x="1470" y="630" width="12" height="182" fill="#3e3e3e"/><rect x="1437" y="579" width="31" height="233" fill="#3e3e3e"/>
<path d="M1452.500 579V812" stroke="#262626"/>
<text x="1437" y="570" font-size="10px" font-weight="bold" fill="#ddd" class="mid">-1.4</text><text x="1467" y="570" font-size="10px" font-weight="bold" fill="#ddd" class="mid">-2.4</text>
<g font-size="10px" fill="#636363"><text x="1424" y="589">12</text><text x="1424" y="611">6</text><text x="1424" y="633" fill="#777">0-</text><text x="1424" y="656">6-</text><text x="1424" y="680">12-</text><text x="1424" y="702">18-</text><text x="1424" y="725">24-</text><text x="1424" y="748">30-</text><text x="1424" y="770">36-</text><text x="1424" y="793">42-</text></g>
<g font-size="10px" fill="#636363" text-anchor="end"><text x="1482" y="589">12</text><text x="1482" y="611">6</text><text x="1482" y="633" fill="#777">-0</text><text x="1482" y="656">-6</text><text x="1482" y="680">-12</text><text x="1482" y="702">-18</text><text x="1482" y="725">-24</text><text x="1482" y="748">-30</text><text x="1482" y="770">-36</text><text x="1482" y="793">-42</text></g>
<text x="1452" y="582" class="meter">-0-</text><text x="1452" y="605" class="meter">-6-</text><text x="1452" y="628" class="meter">-12-</text><text x="1452" y="650" class="meter">-18-</text><text x="1452" y="673" class="meter">-24-</text><text x="1452" y="696" class="meter">-30-</text><text x="1452" y="718" class="meter">-36-</text><text x="1452" y="741" class="meter">-42-</text><text x="1452" y="764" class="meter">-48-</text><text x="1452" y="786" class="meter">-54-</text>
<rect x="1423" y="629.500" width="12" height="1.500" fill="#999"/><rect x="1470" y="629.500" width="12" height="1.500" fill="#999"/>
<rect x="1497.500" y="568" width="1.500" height="249" fill="#111"/>
<rect x="1488.500" y="621.500" width="19" height="42" rx="3" fill="url(#fd)" stroke="#0c0c0c" stroke-width="1.200"/><rect x="1491" y="642" width="14" height="1" fill="#ccc"/>
<rect x="1516" y="795" width="15" height="18" fill="#4c4c4c"/><path d="M1518 807l4-4 2 3 4-5" stroke="#888" stroke-width="2" fill="none"/>
<text x="1524" y="821" font-size="6px" font-weight="bold" fill="#666" class="mid">TRIM</text>
<text x="1437" y="822" font-size="10px" font-weight="bold" fill="#ddd" class="mid">L-M</text><text x="1466" y="822" font-size="10px" font-weight="bold" fill="#ddd" class="mid">-13.1</text>
<circle cx="1429" cy="842" r="7.500" fill="none" stroke="#777"/><text x="1429" y="846" font-size="10px" font-family="Liberation Serif" fill="#888" class="mid">i</text>
<text x="1491" y="847" font-size="14px" fill="#a8a8a8" class="mid">MASTER</text>

<!-- media explorer -->
<rect x="4" y="508" width="39" height="20" fill="#b4b6b6"/><rect x="44" y="508" width="20" height="20" fill="#b4b6b6"/><rect x="65" y="508" width="20" height="20" fill="#b4b6b6"/>
<path d="M7.500 518L14 513V516H20V520H14V523Z" fill="none" stroke="#333" stroke-width="1.100"/><path d="M39.500 518L33 513V516H27V520H33V523Z" fill="none" stroke="#333" stroke-width="1.100"/>
<path d="M48 525H54V518H58L53 511L48 518H51V522H48Z" fill="#222"/>
<path d="M81 521A6.500 6.500 0 1 1 78 513" fill="none" stroke="#222" stroke-width="2.800"/><path d="M76 508L83 513L76 517Z" fill="#222"/>
<rect x="89" y="509" width="1319" height="19" fill="#fff"/><rect x="91" y="511" width="1293" height="15" fill="#454545"/><path d="M1394 516L1398 520L1402 516" fill="none" stroke="#555"/>
<rect x="4" y="534" width="257" height="141" fill="#eff0f1" stroke="#8a8e8e"/><rect x="5.500" y="535" width="231.500" height="116" fill="#c0c3c3"/>
<path d="M15.500 542V651" stroke="#222" stroke-dasharray="1 1"/><path d="M16 544.500H21M16 560.500H21M16 576.500H21M16 592.500H21M16 608.500H21M16 624.500H21M16 640.500H21" stroke="#222" stroke-dasharray="1 1"/>
<rect x="21" y="584" width="43" height="16" fill="#858585"/>
<text class="tree" x="23" y="548">All Samples</text><text class="tree" x="23" y="564">FX</text><text class="tree" x="23" y="580">GlassOneshots</text><text class="tree" x="23" y="596" style="fill:#c8c8c8">KSHMR</text><text class="tree" x="23" y="612" textLength="187">JungleJungle 1989 -  1999 SamplePack</text>
<svg x="5" y="535" width="232" height="116"><text class="tree" x="21" y="93" style="letter-spacing:-.3px">Lo-fi &amp; Beats - Oversampled - Lucid Dreaming Music</text></svg>
<text class="tree" x="23" y="644" textLength="178">Future Bass - Oversampled/ Ultrasonic</text>
<path d="M244 552h10l-5-7z" fill="#858585"/><rect x="243" y="558" width="11" height="22" rx="3" fill="#8a8a8a"/><path d="M244 637h10l-5 7z" fill="#858585"/>
<path d="M19.500 658v10l-7-5z" fill="#8a8a8a"/><rect x="28" y="657" width="184" height="11" rx="3" fill="#8a8a8a"/><path d="M223 658v10l7-5z" fill="#8a8a8a"/>

<rect x="266" y="534" width="1143" height="141" fill="#c0c3c3"/><rect x="266" y="653" width="1143" height="22" fill="#eff0f1"/>
<rect x="282" y="570" width="462" height="18" fill="#858585"/>
<g fill="#fff" stroke="#9aa"><path d="M268.500 536.500h9l3 3v10h-12z"/><path d="M268.500 554.500h9l3 3v10h-12z"/><path d="M268.500 572.500h9l3 3v10h-12z"/><path d="M268.500 590.500h9l3 3v10h-12z"/><path d="M268.500 608.500h9l3 3v10h-12z"/><path d="M268.500 626.500h9l3 3v10h-12z"/>
<path d="M851.500 536.500h9l3 3v10h-12z"/><path d="M851.500 554.500h9l3 3v10h-12z"/><path d="M851.500 572.500h9l3 3v10h-12z"/><path d="M851.500 590.500h9l3 3v10h-12z"/><path d="M851.500 608.500h9l3 3v10h-12z"/><path d="M851.500 626.500h9l3 3v10h-12z"/></g>
<g fill="none" stroke="#55b22e" stroke-width="1.200"><path d="M269 544h2l1-3 1 5 1-3 1 1h4"/><path d="M269 562h2l1-3 1 5 1-3 1 1h4"/><path d="M269 580h2l1-3 1 5 1-3 1 1h4"/><path d="M269 598h2l1-3 1 5 1-3 1 1h4"/><path d="M269 616h2l1-3 1 5 1-3 1 1h4"/><path d="M269 634h2l1-3 1 5 1-3 1 1h4"/><path d="M852 544h2l1-3 1 5 1-3 1 1h4"/><path d="M852 562h2l1-3 1 5 1-3 1 1h4"/><path d="M852 580h2l1-3 1 5 1-3 1 1h4"/><path d="M852 598h2l1-3 1 5 1-3 1 1h4"/><path d="M852 616h2l1-3 1 5 1-3 1 1h4"/><path d="M852 634h2l1-3 1 5 1-3 1 1h4"/></g>
<text class="file" x="284" y="548" textLength="457">Drums Loops\Cinematic Drum Loops\KSHMR Cinematic Drums 100BPM 01.wav</text>
<text class="file" x="284" y="566" textLength="459">Drums Loops\Cinematic Drum Loops\KSHMR Cinematic Drums 100BPM 02.wav</text>
<text class="file" x="284" y="584" textLength="459" style="fill:#c6c8c8">Drums Loops\Cinematic Drum Loops\KSHMR Cinematic Drums 100BPM 03.wav</text>
<text class="file" x="284" y="602" textLength="459">Drums Loops\Cinematic Drum Loops\KSHMR Cinematic Drums 100BPM 04.wav</text>
<text class="file" x="284" y="620" textLength="459">Drums Loops\Cinematic Drum Loops\KSHMR Cinematic Drums 100BPM 05.wav</text>
<text class="file" x="284" y="638" textLength="459">Drums Loops\Cinematic Drum Loops\KSHMR Cinematic Drums 128BPM 06.wav</text>
<text class="file" x="867" y="548" textLength="459">Drums Loops\Cinematic Drum Loops\KSHMR Cinematic Drums 128BPM 07.wav</text>
<text class="file" x="867" y="566" textLength="459">Drums Loops\Cinematic Drum Loops\KSHMR Cinematic Drums 128BPM 08.wav</text>
<text class="file" x="867" y="584" textLength="459">Drums Loops\Cinematic Drum Loops\KSHMR Cinematic Drums 128BPM 09.wav</text>
<text class="file" x="867" y="602" textLength="457">Drums Loops\Cinematic Drum Loops\KSHMR Cinematic Drums 128BPM 10.wav</text>
<text class="file" x="867" y="620" textLength="455">Drums Loops\Cinematic Drum Loops\KSHMR Cinematic Drums 128BPM 11.wav</text>
<text class="file" x="867" y="638" textLength="457">Drums Loops\Cinematic Drum Loops\KSHMR Cinematic Drums 128BPM 12.wav</text>
<path d="M280 660v9l-7-4.500z" fill="#8a8a8a"/><rect x="288" y="659" width="22" height="11" rx="3" fill="#8a8a8a"/><path d="M1396 660v9l7-4.500z" fill="#8a8a8a"/>

<!-- preview controls -->
<circle cx="16" cy="692" r="10" fill="#5cb898"/><path d="M12 686V698L22 692Z" fill="#d8e8e2"/>
<rect x="30" y="682" width="20" height="20" fill="#b4b6b6"/><rect x="36" y="687" width="3" height="10" fill="#333"/><rect x="41" y="687" width="3" height="10" fill="#333"/>
<rect x="54" y="682" width="20" height="20" fill="#b4b6b6"/><rect x="59" y="687" width="10" height="10" fill="#333"/>
<circle cx="88" cy="692" r="10" fill="#b4b6b6"/><path d="M83 692a5 5 0 0 1 9-3M93 692a5 5 0 0 1-9 3" fill="none" stroke="#444" stroke-width="2"/>
<rect x="106" y="682" width="20" height="19" fill="#202020"/><path d="M108 701L112 683h3L111 701Z" fill="#50b898"/><path d="M113 701L117 683h3L116 701Z" fill="#d2c82e"/><path d="M118 701L122 683h3L121 701Z" fill="#4a8ad0"/>
<text class="lab" x="145" y="696">Pitch:</text><circle cx="184.500" cy="691" r="9.700" fill="none" stroke="#c8c8c8"/><path d="M184.500 682V691" stroke="#c8c8c8"/>
<rect x="198" y="683" width="31.500" height="18" fill="#444" stroke="#fff" stroke-width="1.500"/><text x="200" y="696" font-size="11px" fill="#c4c4c4">0.00</text>
<text class="lab" x="239" y="696">Rate:</text><circle cx="278.500" cy="691" r="9.700" fill="none" stroke="#c8c8c8"/><path d="M278.500 682V691" stroke="#c8c8c8"/>
<rect x="296" y="683" width="34.500" height="18" fill="#444" stroke="#fff" stroke-width="1.500"/><text x="299" y="696" font-size="11px" fill="#c4c4c4">1.0</text>
<text class="lab" x="344" y="696">Volume:</text><rect x="388" y="683" width="150" height="17" fill="url(#vs)"/><rect x="481" y="684" width="18" height="15" fill="#c2c2c2" stroke="#555"/><path d="M490 684V699" stroke="#555" stroke-width="1.500"/>
<rect x="544.500" y="683" width="34.500" height="18" fill="#444" stroke="#fff" stroke-width="1.500"/><text x="547" y="696" font-size="11px" fill="#c4c4c4">0.00</text><text class="lab" x="588" y="696">dB</text>

<!-- preview waveform -->
<rect x="4.500" y="711.500" width="1378" height="81.500" fill="#85b2dc" stroke="#fff"/>
<circle cx="1393" cy="717" r="7.500" fill="#111"/><path d="M1389 720h8l-4-6z" fill="#bbb"/><rect x="1387" y="761" width="13" height="4" rx="2" fill="#4c4c4c" stroke="#888"/>
<circle cx="1393" cy="787" r="7.500" fill="#111"/><path d="M1389 785h8l-4 6z" fill="#bbb"/>
<circle cx="15" cy="809" r="7.500" fill="#111"/><path d="M18 805v8l-6-4z" fill="#bbb"/>
<rect x="30" y="802" width="1277" height="14" rx="7" fill="#5b5b5b"/><circle cx="37" cy="809" r="3.500" fill="#222"/><circle cx="1300" cy="809" r="3.500" fill="#222"/><rect x="667" y="804" width="2.500" height="10" fill="#222"/>
<circle cx="1323" cy="809" r="7.500" fill="#111"/><path d="M1320 805v8l6-4z" fill="#bbb"/>
<path d="M1339 809H1351M1345 803V815" stroke="#9a9a9a" stroke-width="3.500"/><rect x="1358" y="803" width="2" height="12" fill="#2a2a2a"/><rect x="1366" y="807.500" width="12" height="3" fill="#999"/>
<text x="31" y="837" font-size="10.500px" fill="#bdbdbd">No media file loaded</text>

<!-- bottom tabs -->
<rect x="0" y="844" width="1414" height="14" fill="#141414"/>
<path d="M8 858L13 844H100L94 858Z" fill="#343434"/><text x="3" y="855" font-size="10px" font-weight="bold" fill="#ddd" class="mid">!</text>
<text x="15" y="855" font-size="9.500px" font-weight="bold" fill="#c8c8c8" letter-spacing=".45">Media Explorer</text>
<rect x="0" y="859" width="90" height="3" fill="#252145"/>
</svg>
</body></html>
